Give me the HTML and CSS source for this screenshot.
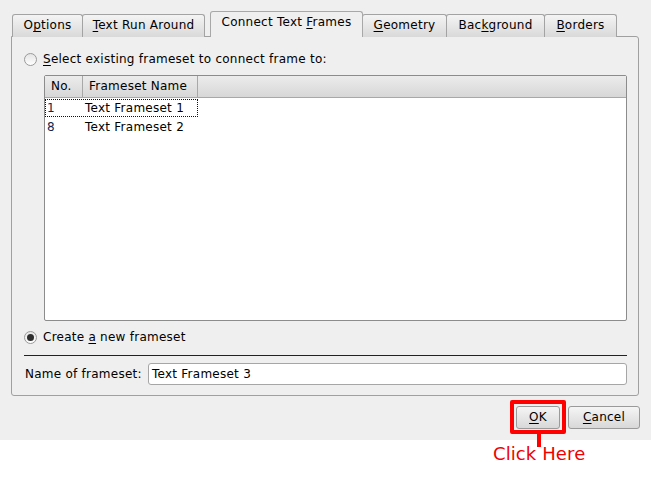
FILE: index.html
```html
<!DOCTYPE html>
<html>
<head>
<meta charset="utf-8">
<link rel="stylesheet" href="styles.css">
</head>
<body>
<div class="dialog">
  <div class="tabs">
    <div class="tab t1">O<u>p</u>tions</div>
    <div class="tab t2"><u>T</u>ext Run Around</div>
    <div class="tab active t3">Connect Text <u>F</u>rames</div>
    <div class="tab t4"><u>G</u>eometry</div>
    <div class="tab t5">Bac<u>k</u>ground</div>
    <div class="tab t6"><u>B</u>orders</div>
  </div>
  <div class="panel">
    <label class="radio-row"><span class="radio"></span><span><u>S</u>elect existing frameset to connect frame to:</span></label>
    <div class="list">
      <div class="list-head">
        <div class="col c1">No.</div>
        <div class="col c2">Frameset Name</div>
        <div class="col c3"></div>
      </div>
      <div class="row focus"><span class="num">1</span><span class="name">Text Frameset 1</span></div>
      <div class="row"><span class="num">8</span><span class="name">Text Frameset 2</span></div>
    </div>
    <label class="radio-row second"><span class="radio checked"></span><span>Create <u>a</u> new frameset</span></label>
    <div class="sep"></div>
    <div class="name-row">
      <span class="lbl">Name of frameset:</span>
      <div class="input">Text Frameset 3</div>
    </div>
  </div>
  <div class="buttons">
    <div class="btn ok"><u>O</u>K</div>
    <div class="btn cancel"><u>C</u>ancel</div>
  </div>
</div>
<div class="callout">
  <div class="callout-box"></div>
  <div class="callout-line"></div>
  <div class="callout-text">Click Here</div>
</div>
</body>
</html>
```
FILE: styles.css
```css
* { box-sizing: border-box; }
html, body { margin: 0; padding: 0; background: #ffffff; }
body { font-family: "DejaVu Sans", sans-serif; font-size: 12px; letter-spacing: 0.25px; color: #000; position: relative; width: 651px; height: 480px; }
u { text-decoration: underline; text-underline-offset: 2px; }

.dialog {
  width: 651px;
  height: 440px;
  background: #efefef;
  padding-top: 11px;
}

.tabs {
  display: flex;
  align-items: flex-end;
  padding-left: 12px;
  height: 26px;
  position: relative;
  z-index: 2;
}
.tab {
  height: 23px;
  line-height: 21px;
  text-align: center;
  border: 1px solid #a3a3a3;
  border-bottom: none;
  border-radius: 3px 3px 0 0;
  background: linear-gradient(#f4f4f4, #d9d9d9);
  margin-left: -1px;
  white-space: nowrap;
}
.tab.t1 { margin-left: 0; width: 71px; }
.tab.t2 { width: 123px; }
.tab.t3 { width: 153px; margin-left: 5px; margin-right: -1px; }
.tab.t4 { width: 85px; margin-left: 0; }
.tab.t5 { width: 99px; }
.tab.t6 { width: 73px; }
.tab.active {
  height: 26px;
  background: #efefef;
  line-height: 20px;
  border-color: #a8a8a8;
  position: relative;
  z-index: 1;
}

.panel {
  margin-left: 11px;
  width: 628px;
  height: 360px;
  margin-top: -1px;
  border: 1px solid #a0a0a0;
  border-radius: 0 3px 3px 3px;
  padding: 13px 11px 0 12px;
  display: flex;
  flex-direction: column;
  position: relative;
  z-index: 1;
}

.radio-row {
  display: flex;
  align-items: center;
  height: 18px;
}
.radio {
  width: 13px;
  height: 13px;
  border: 1px solid #9a9a9a;
  border-radius: 50%;
  background: linear-gradient(#e4e4e4, #ffffff);
  margin-right: 6px;
  position: relative;
}
.radio.checked::after {
  content: "";
  position: absolute;
  left: 2px; top: 2px;
  width: 7px; height: 7px;
  border-radius: 50%;
  background: #2e2e2e;
}

.list {
  margin: 7px 0 0 20px;
  height: 246px;
  background: #fff;
  border: 1px solid #8c8c8c;
  border-radius: 2px;
}
.list-head {
  display: flex;
  height: 22px;
  background: linear-gradient(#ececec, #d7d7d7);
  border-bottom: 1px solid #a8a8a8;
}
.col {
  line-height: 21px;
  padding-left: 6px;
  border-right: 1px solid #a8a8a8;
}
.col.c1 { width: 38px; }
.col.c2 { width: 115px; }
.col.c3 { flex: 1; border-right: none; }

.row {
  display: flex;
  height: 18px;
  line-height: 16px;
  width: 153px;
  margin-top: 1px;
  border: 1px solid transparent;
}
.row.focus { border: 1px dotted #111; }
.num { width: 39px; padding-left: 1px; color: #14244a; }
.name { flex: 1; }

.radio-row.second { margin-top: 7px; }

.sep {
  height: 1px;
  background: #222;
  margin-top: 9px;
}

.name-row {
  display: flex;
  align-items: center;
  margin-top: 7px;
}
.lbl { padding-left: 1px; width: 124px; }
.input {
  flex: 1;
  height: 22px;
  line-height: 20px;
  background: #fff;
  border: 1px solid #a6a6a6;
  border-radius: 3px;
  padding-left: 3px;
}

.buttons {
  display: flex;
  justify-content: flex-end;
  gap: 8px;
  padding-right: 11px;
  margin-top: 10px;
}
.btn {
  height: 23px;
  line-height: 21px;
  text-align: center;
  border: 1px solid #9a9a9a;
  border-radius: 3px;
  background: linear-gradient(#f5f5f5, #d8d8d8);
}
.btn.ok { width: 44px; }
.btn.cancel { width: 72px; }

.callout {
  position: absolute;
  left: 493px;
  top: 400px;
  width: 100px;
  height: 70px;
  z-index: 10;
}
.callout-box {
  position: absolute;
  left: 17px;
  top: 0;
  width: 56px;
  height: 34px;
  border: 4px solid #ff0000;
  border-radius: 2px;
}
.callout-line {
  position: absolute;
  left: 44px;
  top: 33px;
  width: 4px;
  height: 14px;
  background: #ff0000;
}
.callout-text {
  position: absolute;
  left: 0;
  top: 43px;
  font-size: 18px;
  line-height: 22px;
  color: #f00000;
  white-space: nowrap;
  letter-spacing: 0.1px;
}
```
